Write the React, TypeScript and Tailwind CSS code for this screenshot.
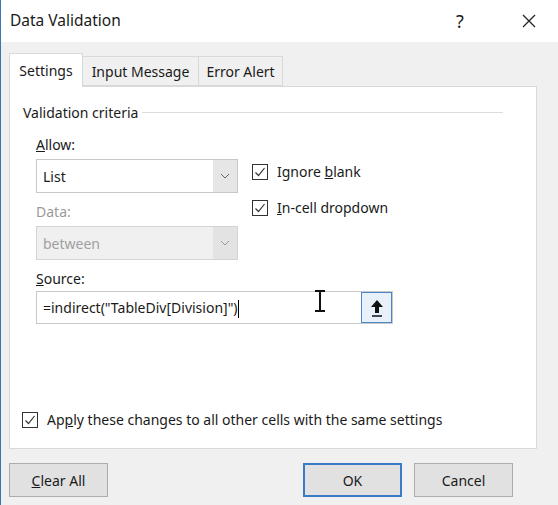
const font = { fontFamily: '"Noto Sans", "Open Sans", sans-serif' }

function Check() {
  return (
    <div className="w-[16px] h-[16px] border border-[#333] bg-white flex items-center justify-center shrink-0">
      <svg width="12" height="12" viewBox="0 0 12 12">
        <path d="M1.5 6.5 L4.5 9.5 L10.5 2" fill="none" stroke="#333" strokeWidth="1.2" />
      </svg>
    </div>
  )
}

function Chevron({ color }: { color: string }) {
  return (
    <svg width="10" height="6" viewBox="0 0 10 6">
      <path d="M1 1 L5 5 L9 1" fill="none" stroke={color} strokeWidth="1" />
    </svg>
  )
}

export default function App() {
  return (
    <div style={font} className="w-[558px] h-[505px] bg-[#f0f0f0] border-l border-[#3b75b5] text-[#1a1a1a] flex flex-col overflow-hidden">
      <div className="h-[42px] bg-white flex items-center pl-[9px] shrink-0">
        <span className="text-[15.5px] flex-1">Data Validation</span>
        <span className="text-[18px] w-[20px] mr-[52px] text-center">?</span>
        <svg width="14" height="14" viewBox="0 0 14 14" className="mr-[22px]">
          <path d="M1 1 L13 13 M13 1 L1 13" stroke="#222" strokeWidth="1.3" />
        </svg>
      </div>

      <div className="flex items-end pl-[8px] mt-[10px] h-[34px] text-[14px]">
        <div className="h-[34px] w-[74px] bg-white border border-b-0 border-[#d9d9d9] flex items-center justify-center relative z-10 -mb-px">Settings</div>
        <div className="h-[30px] w-[116px] border border-l-0 border-[#d9d9d9] flex items-center justify-center">Input Message</div>
        <div className="h-[30px] w-[84px] border border-l-0 border-[#d9d9d9] flex items-center justify-center">Error Alert</div>
      </div>

      <div className="ml-[8px] w-[528px] h-[363px] bg-white border border-[#d9d9d9] relative text-[14px]">
        <div className="flex items-center mt-[15px] ml-[13px] mr-[33px]">
          <span>Validation criteria</span>
          <div className="flex-1 h-px bg-[#dcdcdc] ml-[4px]" />
        </div>
        <div className="flex ml-[26px] mt-[11px]">
          <div className="w-[202px] flex flex-col">
            <span><span className="underline">A</span>llow:</span>
            <div className="mt-[4px] h-[34px] border border-[#c8c8c8] flex">
              <span className="flex-1 flex items-center pl-[6px]">List</span>
              <div className="w-[24px] bg-[#e6e6e6] flex items-center justify-center"><Chevron color="#666" /></div>
            </div>
            <span className="mt-[8px] text-[#9a9a9a]">Data:</span>
            <div className="mt-[4px] h-[34px] border border-[#d4d4d4] bg-[#f0f0f0] flex text-[#a0a0a0]">
              <span className="flex-1 flex items-center pl-[6px]">between</span>
              <div className="w-[24px] bg-[#e3e3e3] flex items-center justify-center"><Chevron color="#999" /></div>
            </div>
          </div>
          <div className="ml-[14px] mt-[27px] flex flex-col gap-[15px]">
            <div className="flex items-center gap-[9px]"><Check /><span>Ignore <span className="underline">b</span>lank</span></div>
            <div className="flex items-center gap-[9px]"><Check /><span><span className="underline">I</span>n-cell dropdown</span></div>
          </div>
        </div>
        <div className="ml-[26px] mt-[8px]"><span className="underline">S</span>ource:</div>
        <div className="ml-[26px] mt-[2px] w-[357px] h-[33px] border border-[#c8c8c8] flex items-center relative">
          <span className="flex-1 pl-[6px]">=indirect("TableDiv[Division]")<span className="inline-block w-px h-[18px] bg-black align-middle" /></span>
          <div className="w-[31px] h-[31px] border border-[#4a86c8] bg-[#e8f0fa] flex items-center justify-center">
            <svg width="14" height="18" viewBox="0 0 14 18">
              <path d="M7 1 L1 8 H5 V14 H9 V8 H13 Z" fill="#111" />
              <path d="M2 17 H12" stroke="#111" strokeWidth="1.5" />
            </svg>
          </div>
          <svg width="12" height="22" viewBox="0 0 12 22" className="absolute left-[277px] top-[-2px]">
            <path d="M1 1 H11 M6 1 V21 M1 21 H11" stroke="#111" strokeWidth="2" fill="none" />
          </svg>
        </div>
        <div className="absolute left-[12px] bottom-[18px] flex items-center gap-[9px]">
          <Check /><span>Ap<span className="underline">p</span>ly these changes to all other cells with the same settings</span>
        </div>
      </div>

      <div className="flex ml-[8px] mt-[14px] text-[14px]">
        <div className="w-[99px] h-[34px] bg-[#e1e1e1] border border-[#adadad] flex items-center justify-center"><span><span className="underline">C</span>lear All</span></div>
        <div className="w-[99px] h-[34px] ml-[195px] bg-[#e1e1e1] border-2 border-[#3a7bc8] flex items-center justify-center">OK</div>
        <div className="w-[99px] h-[34px] ml-[12px] bg-[#e1e1e1] border border-[#adadad] flex items-center justify-center">Cancel</div>
      </div>
    </div>
  )
}
